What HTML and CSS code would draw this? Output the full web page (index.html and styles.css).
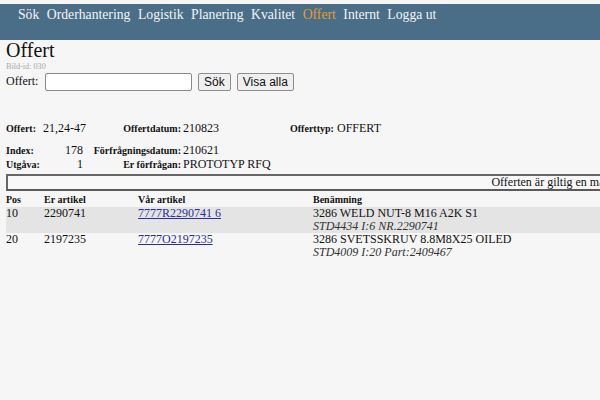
FILE: index.html
```html
<!DOCTYPE html>
<html lang="sv">
<head>
  <meta charset="UTF-8" />
  <title>Offert</title>
  <link rel="stylesheet" href="styles.css">
</head>
<body>
  <!-- toppmeny -->
  <nav class="topnav">
    <a href="#">Sök</a>
    <a href="#">Orderhantering</a>
    <a href="#">Logistik</a>
    <a href="#">Planering</a>
    <a href="#">Kvalitet</a>
    <a href="#" class="current">Offert</a>
    <a href="#">Internt</a>
    <a href="#">Logga ut</a>
  </nav>

  <main class="page">
    <h1>Offert</h1>
    <div class="bild-id">Bild-id: 030</div>
    <form class="search">
      <label for="offertNr">Offert:</label>
      <input type="text" id="offertNr" />
      <button type="button">Sök</button>
      <button type="button">Visa alla</button>
    </form>

    <!-- huvud -->
    <div class="head">
      <div class="row first">
        <b class="lbl">Offert:</b><span class="num">21,24-47</span>
        <b class="lbl2">Offertdatum:</b><span class="val">210823</span>
        <b class="lbl">Offerttyp:</b><span class="val">OFFERT</span>
      </div>
      <div class="row">
        <b class="lbl">Index:</b><span class="num">178</span>
        <b class="lbl2">Förfrågningsdatum:</b><span class="val">210621</span>
      </div>
      <div class="row">
        <b class="lbl">Utgåva:</b><span class="num">1</span>
        <b class="lbl2">Er förfrågan:</b><span class="val">PROTOTYP RFQ</span>
      </div>
    </div>

    <div class="notice">Offerten är giltig en månad från offertdatum.</div>

    <table class="rows">
      <thead>
        <tr><th class="c-pos">Pos</th><th class="c-er">Er artikel</th><th class="c-var">Vår artikel</th><th>Benämning</th></tr>
      </thead>
      <tbody>
        <tr class="odd">
          <td>10</td><td>2290741</td><td><a href="#">7777R2290741 6</a></td>
          <td>3286 WELD NUT-8 M16 A2K S1<br><i>STD4434 I:6 NR.2290741</i></td>
        </tr>
        <tr>
          <td>20</td><td>2197235</td><td><a href="#">7777O2197235</a></td>
          <td>3286 SVETSSKRUV 8.8M8X25 OILED<br><i>STD4009 I:20 Part:2409467</i></td>
        </tr>
      </tbody>
    </table>
  </main>
</body>
</html>
```

FILE: styles.css
```css
html,body{overflow:hidden}
body{margin:0;background:#f6f6f6;font-family:"Liberation Serif","Times New Roman",serif;font-size:12px;color:#111}
/* meny */
.topnav{margin-top:4px;height:36px;background:#4a6e88;padding:3px 0 0 18px;box-sizing:border-box;display:flex;gap:7.5px;font-size:13.7px;line-height:16px}
.topnav a{color:#f4f4f4;text-decoration:none}
.topnav a.current{color:#eb9a2c}
/* sida */
.page{padding:0 6px}
h1{margin:0;font-size:20px;font-weight:normal;line-height:20px}
.bild-id{font-size:8.2px;color:#a8a8a8;line-height:10px;margin-top:2px}
.search{display:flex;align-items:center;margin:0;height:19px}
.search label{width:39px}
.search input{width:147px;height:18px;box-sizing:border-box;border:1px solid #8a8a8a;border-radius:2px;background:#fff;margin:0 6px 0 0;padding:1px 3px}
.search button{font-family:"Liberation Sans",Arial,sans-serif;font-size:12px;height:18px;padding:0 5px;margin:0 6px 0 0;border:1px solid #8d8d8d;border-radius:2px;background:#efefef;color:#111;line-height:14px}
/* huvud */
.head{margin-top:30px}
.row{display:grid;grid-template-columns:37px 40px 100px 107px 47px auto;align-items:baseline;height:14px;line-height:14px;white-space:nowrap}
.row.first{margin-bottom:8px}
.lbl,.lbl2{font-size:10px}
.num{text-align:right}
.lbl2{text-align:right;padding-right:2px}
/* meddelande */
.notice{margin-top:3px;width:1186px;height:17px;box-sizing:border-box;border:2px solid #666;border-bottom-color:#5a5a5a;text-align:center;line-height:13px;background:#f8f8f8}
/* rader */
.rows{margin-top:2px;border-collapse:collapse;width:800px}
.rows th{font-size:10px;text-align:left;padding:0;line-height:14px}
.rows td{padding:0;vertical-align:top;line-height:13px}
.rows tr.odd{background:#e4e4e4}
.c-pos{width:38px}.c-er{width:94px}.c-var{width:175px}
.rows a{color:#2c2c9c}
.rows i{color:#333}
```
